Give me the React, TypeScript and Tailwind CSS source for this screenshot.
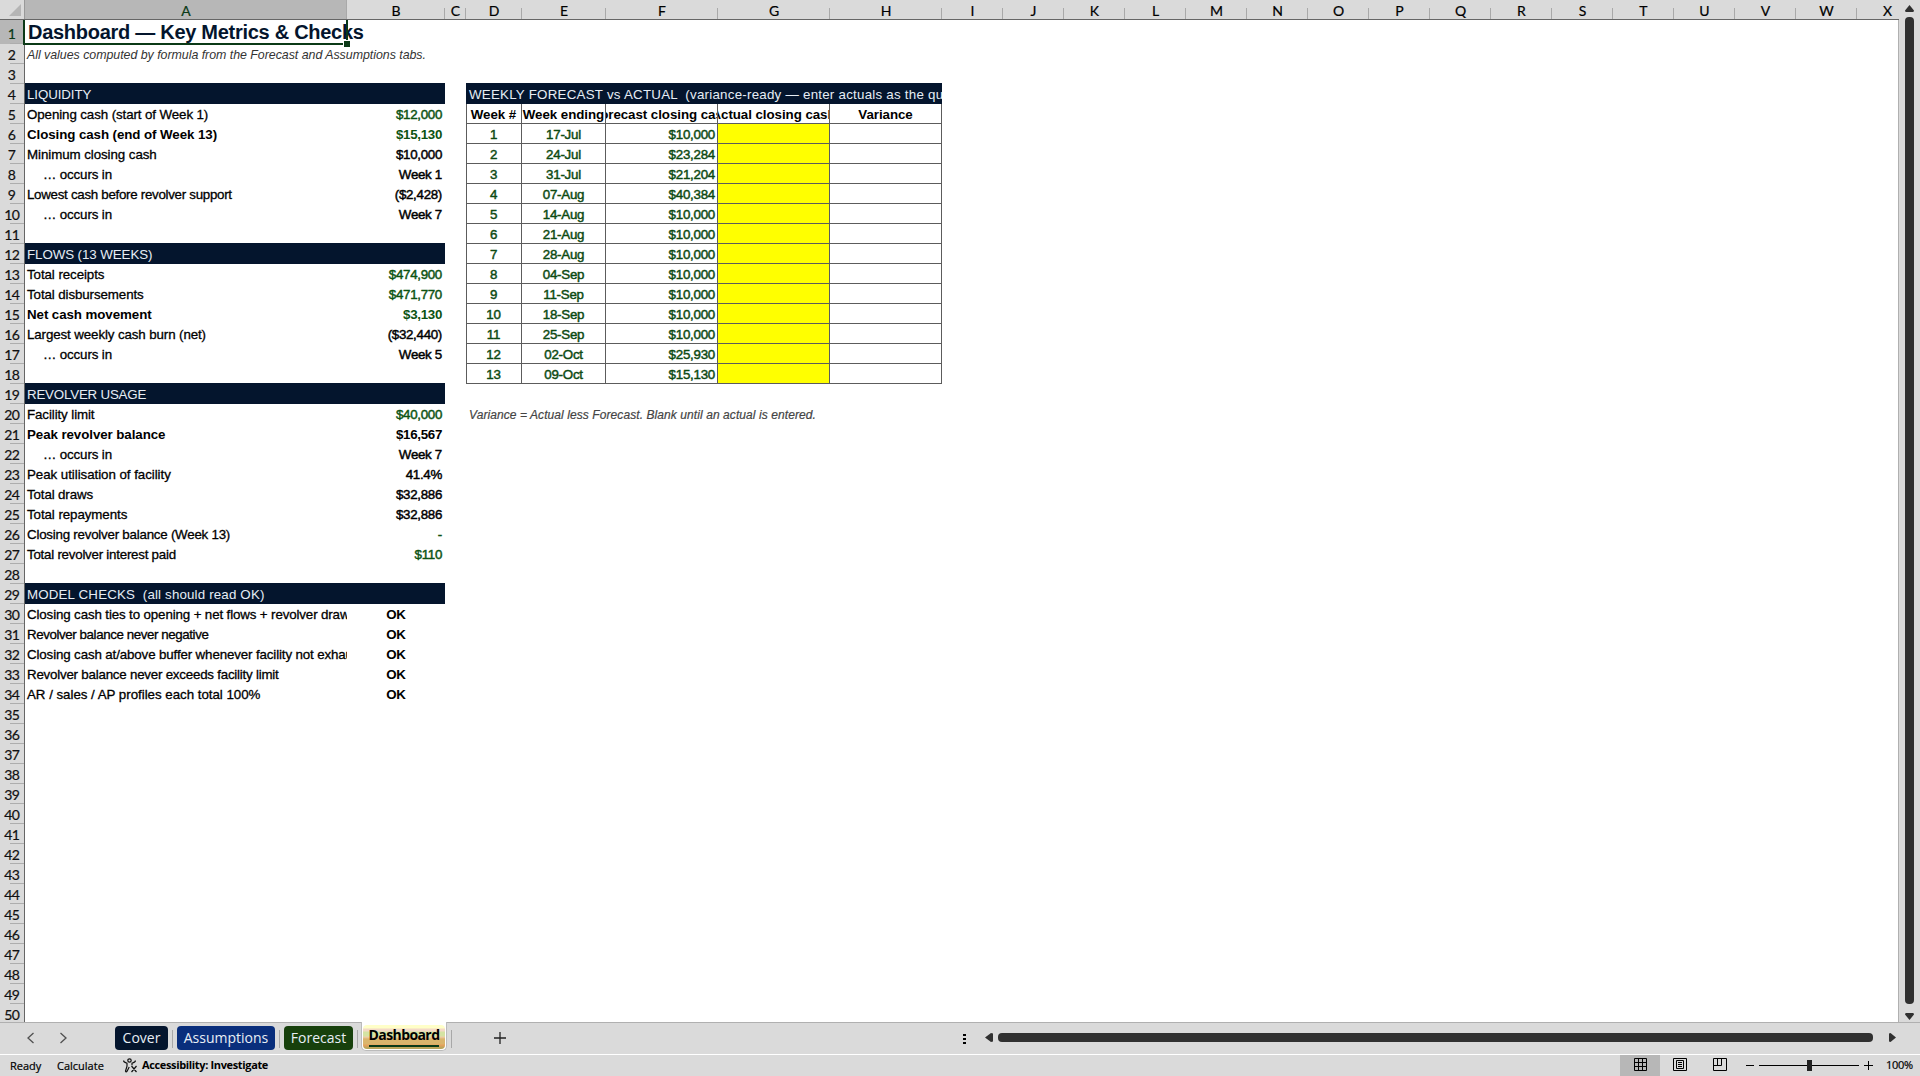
import type { ReactNode } from 'react'

interface Metric {
  label: string
  value?: string
  kind?: 'section' | 'bold' | 'indent' | 'check'
  green?: boolean
  className?: string
}

interface ForecastWeek {
  ending: string
  closing: string
}

// Columns A to H, then fifteen default-width columns and a clipped last one
const GRID = 'grid grid-cols-[322px_98px_21px_56px_84px_112px_112px_112px] grid-rows-[20px]'

const columnWidths = [322, 98, 21, 56, 84, 112, 112, 112, ...Array(15).fill(61)]
const columnNames = 'ABCDEFGHIJKLMNOPQRSTUVW'.split('')

const metrics: Record<number, Metric> = {
  4: { label: 'LIQUIDITY', kind: 'section', className: 'tracking-[-0.1px]' },
  5: { label: 'Opening cash (start of Week 1)', value: '$12,000', green: true, className: 'tracking-[-0.1px]' },
  6: { label: 'Closing cash (end of Week 13)', value: '$15,130', kind: 'bold', green: true },
  7: { label: 'Minimum closing cash', value: '$10,000', className: 'tracking-[-0.07px]' },
  8: { label: '… occurs in', value: 'Week 1', kind: 'indent' },
  9: { label: 'Lowest cash before revolver support', value: '($2,428)', className: 'tracking-[-0.29px]' },
  10: { label: '… occurs in', value: 'Week 7', kind: 'indent' },
  12: { label: 'FLOWS (13 WEEKS)', kind: 'section', className: 'tracking-[-0.08px]' },
  13: { label: 'Total receipts', value: '$474,900', green: true, className: 'tracking-[-0.08px]' },
  14: { label: 'Total disbursements', value: '$471,770', green: true, className: 'tracking-[-0.1px]' },
  15: { label: 'Net cash movement', value: '$3,130', kind: 'bold', green: true },
  16: { label: 'Largest weekly cash burn (net)', value: '($32,440)', className: 'tracking-[-0.11px]' },
  17: { label: '… occurs in', value: 'Week 5', kind: 'indent' },
  19: { label: 'REVOLVER USAGE', kind: 'section', className: 'tracking-[-0.2px]' },
  20: { label: 'Facility limit', value: '$40,000', green: true, className: 'tracking-[-0.1px]' },
  21: { label: 'Peak revolver balance', value: '$16,567', kind: 'bold' },
  22: { label: '… occurs in', value: 'Week 7', kind: 'indent' },
  23: { label: 'Peak utilisation of facility', value: '41.4%', className: 'tracking-[-0.05px]' },
  24: { label: 'Total draws', value: '$32,886' },
  25: { label: 'Total repayments', value: '$32,886', className: 'tracking-[-0.08px]' },
  26: { label: 'Closing revolver balance (Week 13)', value: '-', green: true, className: 'tracking-[-0.23px]' },
  27: { label: 'Total revolver interest paid', value: '$110', green: true, className: 'tracking-[-0.24px]' },
  29: { label: 'MODEL CHECKS  (all should read OK)', kind: 'section', className: 'tracking-[0.16px]' },
  30: { label: 'Closing cash ties to opening + net flows + revolver draws', value: 'OK', kind: 'check' },
  31: { label: 'Revolver balance never negative', value: 'OK', kind: 'check', className: 'tracking-[-0.41px]' },
  32: { label: 'Closing cash at/above buffer whenever facility not exhausted', value: 'OK', kind: 'check' },
  33: { label: 'Revolver balance never exceeds facility limit', value: 'OK', kind: 'check', className: 'tracking-[-0.22px]' },
  34: { label: 'AR / sales / AP profiles each total 100%', value: 'OK', kind: 'check', className: 'tracking-[-0.03px]' },
}

const weeks: ForecastWeek[] = [
  { ending: '17-Jul', closing: '$10,000' },
  { ending: '24-Jul', closing: '$23,284' },
  { ending: '31-Jul', closing: '$21,204' },
  { ending: '07-Aug', closing: '$40,384' },
  { ending: '14-Aug', closing: '$10,000' },
  { ending: '21-Aug', closing: '$10,000' },
  { ending: '28-Aug', closing: '$10,000' },
  { ending: '04-Sep', closing: '$10,000' },
  { ending: '11-Sep', closing: '$10,000' },
  { ending: '18-Sep', closing: '$10,000' },
  { ending: '25-Sep', closing: '$10,000' },
  { ending: '02-Oct', closing: '$25,930' },
  { ending: '09-Oct', closing: '$15,130' },
]

/**
 * Column letters along the top of the sheet.
 */
function ColumnHeader() {
  return (
    <div className="flex h-5 border-b border-[#666] font-['Lato','Open_Sans',sans-serif] text-[14px] leading-[21px] text-black [-webkit-text-stroke:0.2px]">
      <div className="flex w-[25px] shrink-0 items-end justify-end border-r border-[#999] pr-[3px] pb-[3px]">
        <svg width="12" height="12" viewBox="0 0 12 12">
          <path d="M12 0v12H0z" fill="#b5b5b5" />
        </svg>
      </div>
      {columnNames.map((name, index) => (
        <div
          key={name}
          className={`flex shrink-0 items-end justify-between ${index === 0 ? 'bg-[#b7b7b7] text-[#0b3a17]' : ''}`}
          style={{ width: columnWidths[index] }}
        >
          <span className="w-px" />
          <span className="h-[19px]">{name}</span>
          <span className={`w-px bg-[#a9a9a9] ${index === 0 ? 'h-[19px]' : 'h-[11px]'}`} />
        </div>
      ))}
      <div className="min-w-0 flex-1 pl-[26px]">X</div>
    </div>
  )
}

function MetricCells({ metric }: { metric?: Metric }) {
  if (!metric) {
    return <div className="col-span-2" />
  }

  if (metric.kind === 'section') {
    return (
      <div
        className={`col-span-2 -mt-px bg-[#04152d] pl-0.5 leading-[23px] whitespace-pre text-[#e6edf5] ${metric.className}`}
      >
        {metric.label}
      </div>
    )
  }

  const bold = metric.kind === 'bold'
  const strong = bold ? 'font-bold tracking-[-0.08px]' : '[-webkit-text-stroke:0.3px]'
  const tracking = bold ? '' : (metric.className ?? 'tracking-[-0.13px]')
  const indent = metric.kind === 'indent' ? 'pl-[18px]' : 'pl-0.5'

  return (
    <>
      <div className={`overflow-hidden whitespace-nowrap ${strong} ${tracking} ${indent}`}>{metric.label}</div>
      {metric.kind === 'check' ? (
        <div className="text-center font-bold tracking-[-0.3px]">{metric.value}</div>
      ) : (
        <div
          className={`pr-[3px] text-right ${bold ? 'font-bold' : '[-webkit-text-stroke:0.45px]'} tracking-[-0.3px] ${metric.green ? 'text-[#0c5312]' : ''}`}
        >
          {metric.value}
        </div>
      )}
    </>
  )
}

function HeadCell({ children }: { children: ReactNode }) {
  return (
    <div className="flex justify-center overflow-hidden border-r border-b border-[#5c5c5c] font-bold tracking-[-0.06px] whitespace-nowrap">
      {children}
    </div>
  )
}

function ForecastCells({ row }: { row: number }) {
  if (row === 4) {
    return (
      <div className="col-span-5 -mt-px overflow-hidden bg-[#04152d] pl-[3px] leading-[23px] tracking-[0.24px] whitespace-pre text-[#e6edf5]">
        WEEKLY FORECAST vs ACTUAL  (variance-ready — enter actuals as the quarter runs)
      </div>
    )
  }

  if (row === 5) {
    return (
      <>
        <div className="overflow-hidden border-r border-b border-[#5c5c5c] text-center font-bold tracking-[-0.06px] whitespace-nowrap shadow-[inset_1px_0_#5c5c5c]">
          Week #
        </div>
        <HeadCell>Week ending</HeadCell>
        <HeadCell>Forecast closing cash</HeadCell>
        <HeadCell>Actual closing cash</HeadCell>
        <HeadCell>Variance</HeadCell>
      </>
    )
  }

  if (row === 20) {
    return (
      <div className="col-span-5 pl-[3px] text-[12px] leading-[22px] tracking-[0.08px] text-[#444] italic [-webkit-text-stroke:0.2px]">
        Variance = Actual less Forecast. Blank until an actual is entered.
      </div>
    )
  }

  const week = weeks[row - 6]
  if (!week) {
    return null
  }

  const cell = 'border-r border-b border-[#5c5c5c] text-[#0c4a12] tracking-[-0.25px] [-webkit-text-stroke:0.45px]'
  return (
    <>
      <div className={`${cell} text-center shadow-[inset_1px_0_#5c5c5c]`}>{row - 5}</div>
      <div className={`${cell} text-center`}>{week.ending}</div>
      <div className={`${cell} pr-0.5 text-right`}>{week.closing}</div>
      <div className={`${cell} bg-[#ffff00]`} />
      <div className={cell} />
    </>
  )
}

function SheetRow({ row }: { row: number }) {
  return (
    <div className={`flex shrink-0 ${row === 1 ? 'h-6' : 'h-5'}`}>
      <div
        className={`flex w-[25px] shrink-0 flex-col items-end justify-between border-r border-[#666] font-['Lato','Open_Sans',sans-serif] text-[14px] tracking-[-0.8px] [-webkit-text-stroke:0.2px] ${row === 1 ? 'bg-[#b7b7b7] pt-[3px] text-[#0b3a17]' : 'text-[#111]'}`}
      >
        <span className={`h-[18px] leading-[22px] ${row < 10 ? 'pr-[9px]' : 'pr-[5px]'}`}>{row}</span>
        <span className="h-px w-[14px] bg-[#adadad]" />
      </div>
      {row === 1 && (
        <div className="relative -ml-px w-[323px] whitespace-nowrap">
          <h1 className="pl-1 text-[20px] leading-[25px] font-bold tracking-[-0.28px] text-[#04152d]">
            Dashboard — Key Metrics &amp; Checks
          </h1>
          <div className="absolute -inset-x-px -top-[2px] bottom-[-1px] border-2 border-[#0b3a17]" />
          <div className="absolute right-[-3px] bottom-[-3px] size-[7px] border-t border-l border-white bg-[#0b3a17]" />
        </div>
      )}
      {row === 2 && (
        <p className="pl-0.5 text-[12.4px] leading-[22px] tracking-[-0.03px] text-[#333] italic">
          All values computed by formula from the Forecast and Assumptions tabs.
        </p>
      )}
      {row > 3 && row < 35 && (
        <div className={`${GRID} text-[13.33px] leading-[21px]`}>
          <MetricCells metric={metrics[row]} />
          <div />
          <ForecastCells row={row} />
        </div>
      )}
    </div>
  )
}

function VerticalScrollbar() {
  return (
    <div className="flex w-[21px] flex-col items-center bg-[#dadada] pt-[5px] pb-[2px]">
      <svg width="9" height="7" viewBox="0 0 9 7">
        <path d="M4.5 0 9 5.5 8.4 7H.6L0 5.5z" fill="#303030" />
      </svg>
      <div className="mt-[5px] mb-[9px] w-[9px] flex-1 rounded-[4px] bg-[#303030]" />
      <svg width="9" height="7" viewBox="0 0 9 7">
        <path d="M4.5 7 0 1.5.6 0h7.8L9 1.5z" fill="#303030" />
      </svg>
    </div>
  )
}

function TabDivider({ className }: { className: string }) {
  return <span className={`mt-[7px] h-[18px] w-px bg-[#a8a8a8] ${className}`} />
}

function SheetTabs() {
  const tab = 'mt-[3px] h-6 rounded-[4px] text-center text-[14px] leading-[24px] text-[#e8eef5]'

  return (
    <div className="flex h-8 border-t border-[#b0b0b0] font-['Open_Sans','Noto_Sans',sans-serif]">
      <svg className="mt-[9px] ml-[26px]" width="42" height="12" viewBox="0 0 42 12" fill="none" stroke="#505050" strokeWidth="1.3">
        <path d="M7.500 1 2 6l5.500 5M34.500 1 40 6l-5.500 5" />
      </svg>
      <div className={`${tab} ml-[47px] w-[53px] bg-[#04152d]`}>Cover</div>
      <TabDivider className="mx-1" />
      <div className={`${tab} w-[98px] bg-[#092e7c]`}>Assumptions</div>
      <TabDivider className="mx-1" />
      <div className={`${tab} w-[69px] bg-[#17400c]`}>Forecast</div>
      <TabDivider className="mr-[3px] ml-1" />
      <div className="-mt-px h-[29px] w-[86px] rounded-b-[5px] border border-t-0 border-[#bbb] bg-white px-px pt-[3px] pb-px">
        <div className="flex h-full flex-col items-center rounded-[4px] bg-[linear-gradient(#ffffc8_3px,#f4d9c6_4px,#f4d9c6_6px,#d5e3a3_7px,#d5e3a3_11px,#f1cdaa_12px,#dab56c_14px,#dab56c_19px,#e9a05c_20px,#b6a55b_23px)]">
          <span className="h-[20px] text-[14px] leading-[20px] font-bold tracking-[-0.6px] text-black">Dashboard</span>
          <span className="h-0.5 w-[70px] bg-[#0b3a17]" />
        </div>
      </div>
      <TabDivider className="ml-1" />
      <svg className="mt-[9px] ml-[42px]" width="12" height="12" viewBox="0 0 12 12" stroke="#222" strokeWidth="1.3">
        <path d="M6 0v12M0 6h12" />
      </svg>
      <div className="mt-[11px] ml-[457px] flex h-[10px] w-[3px] flex-col justify-between">
        <span className="h-0.5 bg-black" />
        <span className="h-0.5 bg-black" />
        <span className="h-0.5 bg-black" />
      </div>
      <svg className="mt-[10px] ml-[19px]" width="8" height="9" viewBox="0 0 8 9">
        <path d="M0 4.500 6 0l2 .5v8L6 9z" fill="#303030" />
      </svg>
      <div className="mt-[10px] ml-[5px] h-[9px] w-[875px] rounded-[4px] bg-[#303030]" />
      <svg className="mt-[10px] ml-4" width="7" height="9" viewBox="0 0 7 9">
        <path d="M7 4.500 1.500 9 0 8.500v-8L1.500 0z" fill="#303030" />
      </svg>
    </div>
  )
}

function StatusBar() {
  return (
    <div className="flex h-[22px] items-center border-t border-white font-['Open_Sans','Noto_Sans',sans-serif] text-[11px] text-black [-webkit-text-stroke:0.2px]">
      <span className="ml-[10px] w-[47px] pt-px">Ready</span>
      <span className="w-[66px] pt-px">Calculate</span>
      <svg width="15" height="15" viewBox="0 0 15 15" fill="none" stroke="#111" strokeWidth="1.2">
        <circle cx="6.500" cy="2.500" r="1.700" />
        <path d="M1 2.500c-.8 1 0 1.500 3 2.700v3L2.500 13c.3 1.200 1.300 1 1.700 0l2-4M12 2.500c.8 1 0 1.500-3 2.700v2M8.500 8l5 6M13.500 8l-5 6" />
      </svg>
      <span className="ml-1 font-bold tracking-[-0.35px] [-webkit-text-stroke:0px]">Accessibility: Investigate</span>
      <div className="ml-auto flex h-full w-10 items-center justify-center bg-[#b7b7b7] pb-0.5">
        <svg width="13" height="13" viewBox="0 0 13 13" fill="none" stroke="#000">
          <path d="M.5.5h12v12H.5zM4.500.5v12M8.500.5v12M.5 4.500h12M.5 8.500h12" />
        </svg>
      </div>
      <svg className="mb-0.5 ml-[13px]" width="14" height="13" viewBox="0 0 14 13" fill="none" stroke="#000">
        <path d="M.5.5h13v12H.5zM3.500 2.500h7v8h-7zM5 4.500h4M5 6.500h4M5 8.500h4" />
      </svg>
      <svg className="mb-0.5 ml-[26px]" width="14" height="13" viewBox="0 0 14 13" fill="none" stroke="#000">
        <path d="M.5.5h13v12H.5zM.5 7.500h8v-7M4.500.5v7" />
      </svg>
      <span className="mb-px ml-[19px] h-px w-2 bg-black" />
      <div className="ml-[5px] flex w-[100px] items-center">
        <span className="h-px w-12 bg-black" />
        <span className="h-[11px] w-[5px] bg-[#222]" />
        <span className="h-px flex-1 bg-black" />
      </div>
      <svg className="mb-px ml-[5px]" width="9" height="9" viewBox="0 0 9 9" stroke="#000">
        <path d="M4.500 0v9M0 4.500h9" />
      </svg>
      <span className="ml-[13px] w-[34px] tracking-[-0.3px]">100%</span>
    </div>
  )
}

export default function App() {
  const rows = Array.from({ length: 50 }, (_, index) => index + 1)

  return (
    <main className="flex h-[1076px] w-[1920px] flex-col overflow-hidden bg-[#dadada] font-['Liberation_Sans',Arial,sans-serif] text-black">
      <div className="flex h-[1022px]">
        <div className="flex w-[1899px] flex-col">
          <ColumnHeader />
          <div className="h-[1002px] overflow-hidden border-r border-[#b0b0b0] bg-[linear-gradient(to_right,#dadada_24px,#ffffff_24px)]">
            {rows.map((row) => (
              <SheetRow key={row} row={row} />
            ))}
          </div>
        </div>
        <VerticalScrollbar />
      </div>
      <SheetTabs />
      <StatusBar />
    </main>
  )
}
